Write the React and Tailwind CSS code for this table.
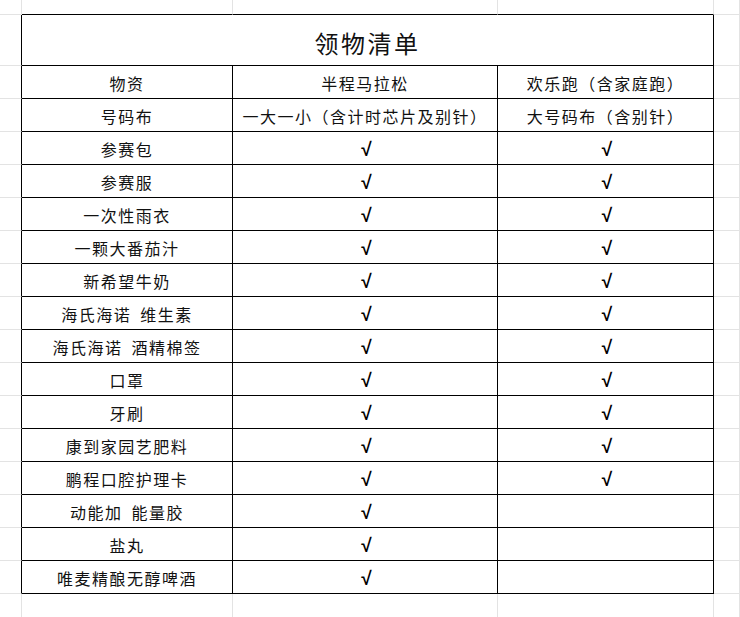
import React from "react";

const rows = [
  ["物资", "半程马拉松", "欢乐跑（含家庭跑）"],
  ["号码布", "一大一小（含计时芯片及别针）", "大号码布（含别针）"],
  ["参赛包", "√", "√"],
  ["参赛服", "√", "√"],
  ["一次性雨衣", "√", "√"],
  ["一颗大番茄汁", "√", "√"],
  ["新希望牛奶", "√", "√"],
  ["海氏海诺 维生素", "√", "√"],
  ["海氏海诺 酒精棉签", "√", "√"],
  ["口罩", "√", "√"],
  ["牙刷", "√", "√"],
  ["康到家园艺肥料", "√", "√"],
  ["鹏程口腔护理卡", "√", "√"],
  ["动能加 能量胶", "√", ""],
  ["盐丸", "√", ""],
  ["唯麦精酿无醇啤酒", "√", ""],
];

function Txt({ t }) {
  if (t === "√") {
    return (
      <span className="text-[19px] font-bold leading-none text-black pl-[3px] pt-[2px]" style={{ fontFamily: '"Liberation Sans", "DejaVu Sans", sans-serif' }}>
        √
      </span>
    );
  }
  return <span className="whitespace-pre tracking-[1.5px] [word-spacing:4px] pt-[1px]">{t}</span>;
}

export default function App() {
  const cells = [];
  const topB = ["border-[#e3e3e3]", "border-b-black border-r-[#e3e3e3]", "border-b-black border-r-[#e3e3e3]", "border-b-black border-r-[#e3e3e3]", "border-[#e3e3e3]"];
  topB.forEach((c, i) => cells.push(<div key={"t" + i} className={"border-r border-b " + c} />));
  cells.push(<div key="tl" className="border-r border-b border-r-black border-b-[#e3e3e3]" />);
  cells.push(
    <div key="title" className="col-span-3 border-r border-b border-black flex items-center justify-center pt-[5px] text-[24px] tracking-[2.5px]">
      领物清单
    </div>
  );
  cells.push(<div key="tr" className="border-r border-b border-[#e3e3e3]" />);
  rows.forEach((r, ri) => {
    cells.push(<div key={"l" + ri} className="border-r border-b border-r-black border-b-[#e3e3e3]" />);
    r.forEach((t, ci) => {
      cells.push(
        <div key={"c" + ri + "-" + ci} className="border-r border-b border-black flex items-center justify-center text-[16px]">
          <Txt t={t} />
        </div>
      );
    });
    cells.push(<div key={"r" + ri} className="border-r border-b border-[#e3e3e3]" />);
  });
  ["a", "b", "c", "d", "e"].forEach((k) => cells.push(<div key={"b" + k} className="border-r border-[#e3e3e3]" />));

  return (
    <div
      className="w-[740px] h-[617px] bg-white text-[#111] overflow-hidden grid grid-cols-[22px_211px_265px_216px_26px] grid-rows-[15px_51px_repeat(16,33px)_23px]"
      style={{ fontFamily: '"Noto Sans CJK SC", "Noto Sans", sans-serif' }}
    >
      {cells}
    </div>
  );
}
